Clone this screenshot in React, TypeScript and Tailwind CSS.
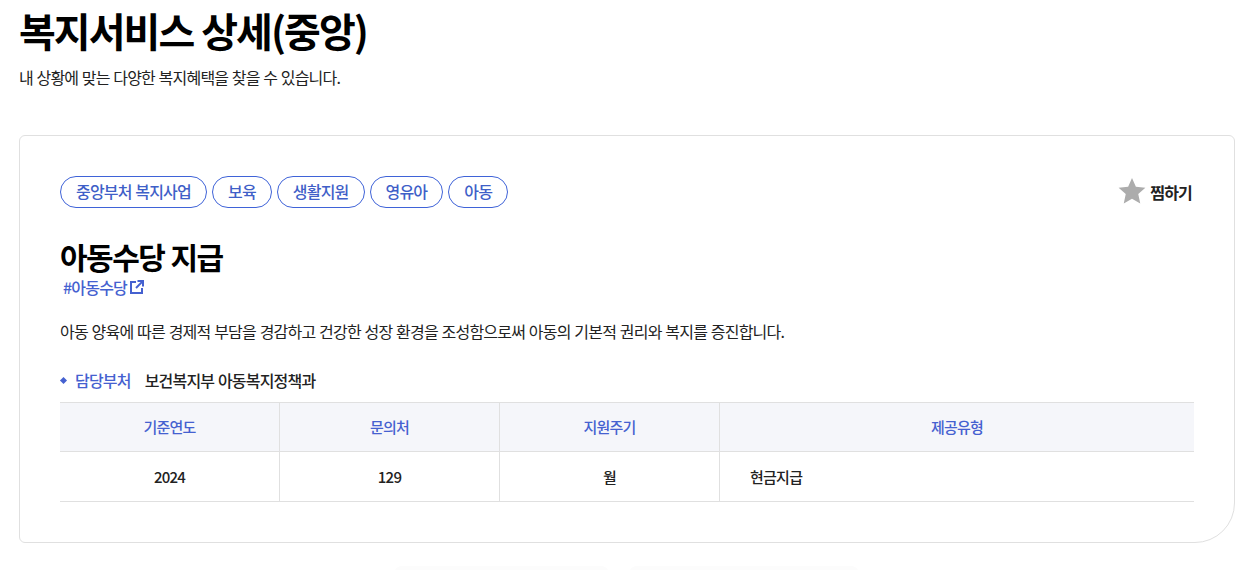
import React from "react";

const tags = ["중앙부처 복지사업", "보육", "생활지원", "영유아", "아동"];

export default function App() {
  return (
    <div className="w-[1252px] h-[570px] overflow-hidden bg-white text-[#111] [word-spacing:0.8px] font-['Noto_Sans_CJK_KR','Noto_Sans',sans-serif]">
      <div className="pl-[19px] pr-[17px]">
        <h1 className="h-[60px] mt-0 text-[40px] leading-[60px] font-bold tracking-[-1.95px] text-black">복지서비스 상세(중앙)</h1>
        <p className="mt-[3px] h-[28px] text-[16px] leading-[28px] tracking-[-0.8px] text-[#222]">내 상황에 맞는 다양한 복지혜택을 찾을 수 있습니다.</p>
        <div className="mt-[44px] h-[408px] border border-[#e0e0e0] rounded-[6px] rounded-br-[40px] pl-[40px] pr-[40px] pt-[40px]">
          <div className="flex items-center justify-between h-[32px]">
            <div className="flex gap-[5px]">
              {tags.map((t) => (
                <span key={t} className="h-[32px] px-[15px] rounded-full border border-[#3f63d8] text-[#3f5fc8] text-[16px] leading-[28px] font-medium tracking-[-0.8px] whitespace-nowrap">{t}</span>
              ))}
            </div>
            <div className="flex items-center gap-[3px] mr-[2px]">
              <svg className="-mt-[3px]" width="30" height="30" viewBox="0 0 24 24" fill="#acacac"><path d="M12 1.5l3.1 7 7.6.8-5.7 5.1 1.6 7.5L12 18.1l-6.6 3.8L7 14.4 1.3 9.3l7.6-.8z" /></svg>
              <span className="text-[16px] font-bold tracking-[-0.8px] text-[#222]">찜하기</span>
            </div>
          </div>
          <h2 className="mt-[32px] h-[32px] text-[30px] leading-[32px] font-bold tracking-[-1.5px] text-black">아동수당 지급</h2>
          <div className="mt-[5px] ml-[3px] h-[20px] flex items-center gap-[3px] text-[#4561d0] text-[16px] font-medium tracking-[-0.8px]">
            <span>#아동수당</span>
            <svg className="-mt-[1px]" width="14" height="14" viewBox="0 0 14 14" fill="none" stroke="#4561d0" strokeWidth="2"><path d="M6 2H1v11h11V8" /><path d="M7.5 1h5.5v5.5" /><path d="M12.6 1.4L6 8" /></svg>
          </div>
          <p className="mt-[22px] h-[24px] text-[16px] leading-[24px] tracking-[-0.8px] [word-spacing:0.95px] text-[#222]">아동 양육에 따른 경제적 부담을 경감하고 건강한 성장 환경을 조성함으로써 아동의 기본적 권리와 복지를 증진합니다.</p>
          <div className="mt-[25px] h-[24px] flex items-center text-[16px] tracking-[-0.8px]">
            <span className="w-[5px] h-[5px] ml-[1px] rotate-45 bg-[#4561d0]" />
            <span className="ml-[9px] font-medium text-[#4561d0]">담당부처</span>
            <span className="ml-[14px] font-medium text-[#222]">보건복지부 아동복지정책과</span>
          </div>
          <div className="mt-[10px] border-t border-[#e0e0e0] text-[15px] tracking-[-0.75px]">
            <div className="grid grid-cols-[220px_220px_220px_1fr] h-[49px] bg-[#f5f6fa] border-b border-[#e0e0e0] text-[#4561d0] font-medium text-center">
              <div className="flex items-center justify-center border-r border-[#e0e0e0]">기준연도</div>
              <div className="flex items-center justify-center border-r border-[#e0e0e0]">문의처</div>
              <div className="flex items-center justify-center border-r border-[#e0e0e0]">지원주기</div>
              <div className="flex items-center justify-center">제공유형</div>
            </div>
            <div className="grid grid-cols-[220px_220px_220px_1fr] h-[50px] border-b border-[#e0e0e0] text-[#222] font-medium">
              <div className="flex items-center justify-center pt-[1px] border-r border-[#e0e0e0]">2024</div>
              <div className="flex items-center justify-center pt-[1px] border-r border-[#e0e0e0]">129</div>
              <div className="flex items-center justify-center pt-[1px] border-r border-[#e0e0e0]">월</div>
              <div className="flex items-center pt-[1px] pl-[30px]">현금지급</div>
            </div>
          </div>
        </div>
        <div className="mt-[23px] flex justify-center gap-[20px] pr-[2px]">
          <div className="h-[8px] w-[215px] rounded-t-[12px] bg-[#fcfcfc]" />
          <div className="h-[8px] w-[230px] rounded-t-[12px] bg-[#fcfcfc]" />
        </div>
      </div>
    </div>
  );
}
